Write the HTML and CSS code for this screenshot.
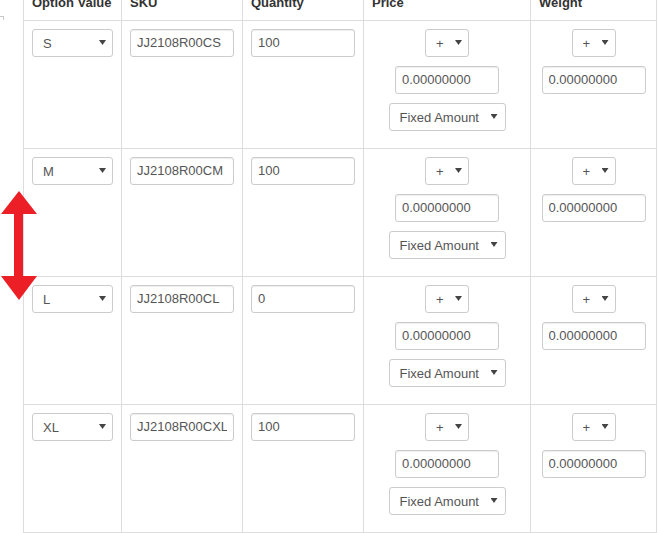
FILE: index.html
```html
<!DOCTYPE html>
<html>
<head>
<meta charset="utf-8">
<link rel="stylesheet" href="styles.css">
</head>
<body>
<div class="page">
  <span class="corner-mark"></span>
  <svg class="red-arrow" width="38" height="111" viewBox="0 0 38 111">
    <polygon points="19,0 37,23 23,23 23,85 37,85 19,109 1,85 14,85 14,23 1,23" fill="#ec1f27"/>
  </svg>
  <table class="variants">
    <thead>
      <tr>
        <th class="c-opt">Option Value</th>
        <th class="c-sku">SKU</th>
        <th class="c-qty">Quantity</th>
        <th class="c-price">Price</th>
        <th class="c-weight">Weight</th>
      </tr>
    </thead>
    <tbody>
      <tr>
        <td><span class="sel w-opt"><select><option>S</option></select></span></td>
        <td><input class="txt" value="JJ2108R00CS"></td>
        <td><input class="txt" value="100"></td>
        <td><div class="stack">
          <span class="sel w-sign"><select><option>+</option></select></span>
          <input class="txt" value="0.00000000">
          <span class="sel w-type"><select><option>Fixed Amount</option></select></span>
        </div></td>
        <td><div class="stack">
          <span class="sel w-sign"><select><option>+</option></select></span>
          <input class="txt" value="0.00000000">
        </div></td>
      </tr>
      <tr>
        <td><span class="sel w-opt"><select><option>M</option></select></span></td>
        <td><input class="txt" value="JJ2108R00CM"></td>
        <td><input class="txt" value="100"></td>
        <td><div class="stack">
          <span class="sel w-sign"><select><option>+</option></select></span>
          <input class="txt" value="0.00000000">
          <span class="sel w-type"><select><option>Fixed Amount</option></select></span>
        </div></td>
        <td><div class="stack">
          <span class="sel w-sign"><select><option>+</option></select></span>
          <input class="txt" value="0.00000000">
        </div></td>
      </tr>
      <tr>
        <td><span class="sel w-opt"><select><option>L</option></select></span></td>
        <td><input class="txt" value="JJ2108R00CL"></td>
        <td><input class="txt" value="0"></td>
        <td><div class="stack">
          <span class="sel w-sign"><select><option>+</option></select></span>
          <input class="txt" value="0.00000000">
          <span class="sel w-type"><select><option>Fixed Amount</option></select></span>
        </div></td>
        <td><div class="stack">
          <span class="sel w-sign"><select><option>+</option></select></span>
          <input class="txt" value="0.00000000">
        </div></td>
      </tr>
      <tr>
        <td><span class="sel w-opt"><select><option>XL</option></select></span></td>
        <td><input class="txt" value="JJ2108R00CXL"></td>
        <td><input class="txt" value="100"></td>
        <td><div class="stack">
          <span class="sel w-sign"><select><option>+</option></select></span>
          <input class="txt" value="0.00000000">
          <span class="sel w-type"><select><option>Fixed Amount</option></select></span>
        </div></td>
        <td><div class="stack">
          <span class="sel w-sign"><select><option>+</option></select></span>
          <input class="txt" value="0.00000000">
        </div></td>
      </tr>
    </tbody>
  </table>
</div>
</body>
</html>
```
FILE: styles.css
```css
html, body {
  margin: 0;
  padding: 0;
  background: #fff;
  overflow: hidden;
}
body {
  font-family: "Liberation Sans", Arial, sans-serif;
  font-size: 13px;
  color: #333;
}
.page {
  position: relative;
  width: 658px;
  height: 533px;
  overflow: hidden;
}
.corner-mark {
  position: absolute;
  left: 0;
  top: 16px;
  width: 3px;
  height: 3px;
  border-top: 1px solid #c8c8c8;
  border-right: 1px solid #c8c8c8;
}
.red-arrow {
  position: absolute;
  left: 0;
  top: 191px;
  z-index: 2;
}
.variants {
  margin: -15px 0 0 23px;
  width: 634px;
  table-layout: fixed;
  border-collapse: separate;
  border-spacing: 0;
}
.variants th,
.variants td {
  box-sizing: border-box;
  padding: 8px;
  border-left: 1px solid #ddd;
  border-bottom: 1px solid #ddd;
  vertical-align: top;
  text-align: left;
}
.variants th:last-child,
.variants td:last-child {
  border-right: 1px solid #ddd;
}
.variants th {
  border-top: 1px solid #ddd;
  font-weight: bold;
  line-height: 18px;
  color: #333;
}
.c-opt { width: 98px; }
.c-sku { width: 121px; }
.c-qty { width: 121px; }
.c-price { width: 167px; }
.c-weight { width: 127px; }

.stack {
  display: flex;
  flex-direction: column;
  align-items: center;
  gap: 9px;
  padding-bottom: 9px;
}
.sel {
  position: relative;
  display: block;
  height: 28px;
}
.sel::after {
  content: "";
  position: absolute;
  right: 7px;
  top: 11px;
  width: 7px;
  height: 5px;
  background: #444;
  clip-path: polygon(0 0, 100% 0, 50% 100%);
  pointer-events: none;
}
.w-opt { width: 81px; }
.w-sign { width: 44px; }
.w-type { width: 117px; }
.w-type::after { right: 8px; }
.sel select {
  -webkit-appearance: none;
  appearance: none;
  box-sizing: border-box;
  display: block;
  width: 100%;
  height: 28px;
  margin: 0;
  padding: 1px 0 0 10px;
  border: 1px solid #ccc;
  border-radius: 3px;
  background: #fff;
  font-family: "Liberation Sans", Arial, sans-serif;
  font-size: 13px;
  line-height: 25px;
  color: #555;
}
.txt {
  box-sizing: border-box;
  display: block;
  width: 104px;
  height: 28px;
  margin: 0;
  padding: 0 6px 1px;
  border: 1px solid #ccc;
  border-radius: 3px;
  background: #fff;
  box-shadow: inset 0 1px 1px rgba(0, 0, 0, 0.075);
  font-family: "Liberation Sans", Arial, sans-serif;
  font-size: 13px;
  color: #555;
}
```
